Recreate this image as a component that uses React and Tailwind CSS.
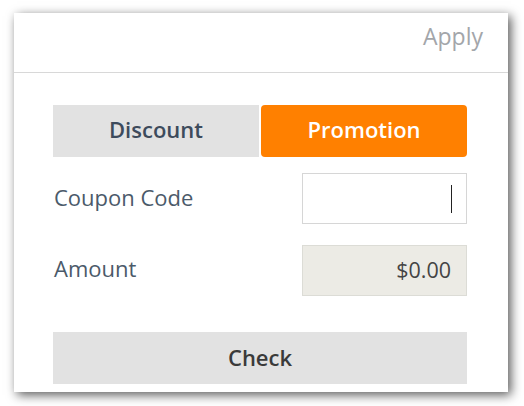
export default function App() {
  return (
    <div className="w-[524px] h-[406px] bg-white pt-[13px] pl-[14px]" style={{ fontFamily: '"Open Sans", sans-serif' }}>
      <div className="w-[494px] h-[379px] bg-white shadow-[3px_3px_10px_rgba(0,0,0,0.65)] flex flex-col">
        <div className="h-[60px] border-b border-[#d8d8d8] flex items-center justify-end pr-[25px] pb-[13px]">
          <span className="text-[23px] text-[#a3a6aa]">Apply</span>
        </div>
        <div className="pl-[39px] pr-[41px] pt-[32px] flex flex-col">
          <div className="flex h-[52px]">
            <div className="w-[206px] bg-[#e2e2e2] flex items-center justify-center pb-[3px] text-[22px] font-semibold text-[#3d4b5c]">Discount</div>
            <div className="ml-[2px] flex-1 bg-[#ff8000] rounded-[4px] flex items-center justify-center pb-[3px] text-[22px] font-semibold text-white">Promotion</div>
          </div>
          <div className="flex items-center justify-between mt-[16px] h-[51px]">
            <span className="text-[22px] text-[#4b5a6a] pl-[1px] pb-[3px]">Coupon Code</span>
            <div className="w-[165px] h-[51px] border border-[#d6d6d6] bg-white flex items-center justify-end pr-[14px]">
              <div className="w-[1.5px] h-[28px] bg-[#222]"></div>
            </div>
          </div>
          <div className="flex items-center justify-between mt-[21px] h-[51px]">
            <span className="text-[22px] text-[#4b5a6a] pl-[1px] pb-[4px]">Amount</span>
            <div className="w-[165px] h-[51px] border border-[#dcdcd6] bg-[#ecebe5] flex items-center justify-end pr-[15px] text-[21.5px] text-[#444]">$0.00</div>
          </div>
          <div className="mt-[36px] h-[52px] bg-[#e2e2e2] flex items-center justify-center pb-[2px] text-[22px] font-semibold text-[#3a3a3a]">Check</div>
        </div>
      </div>
    </div>
  );
}
